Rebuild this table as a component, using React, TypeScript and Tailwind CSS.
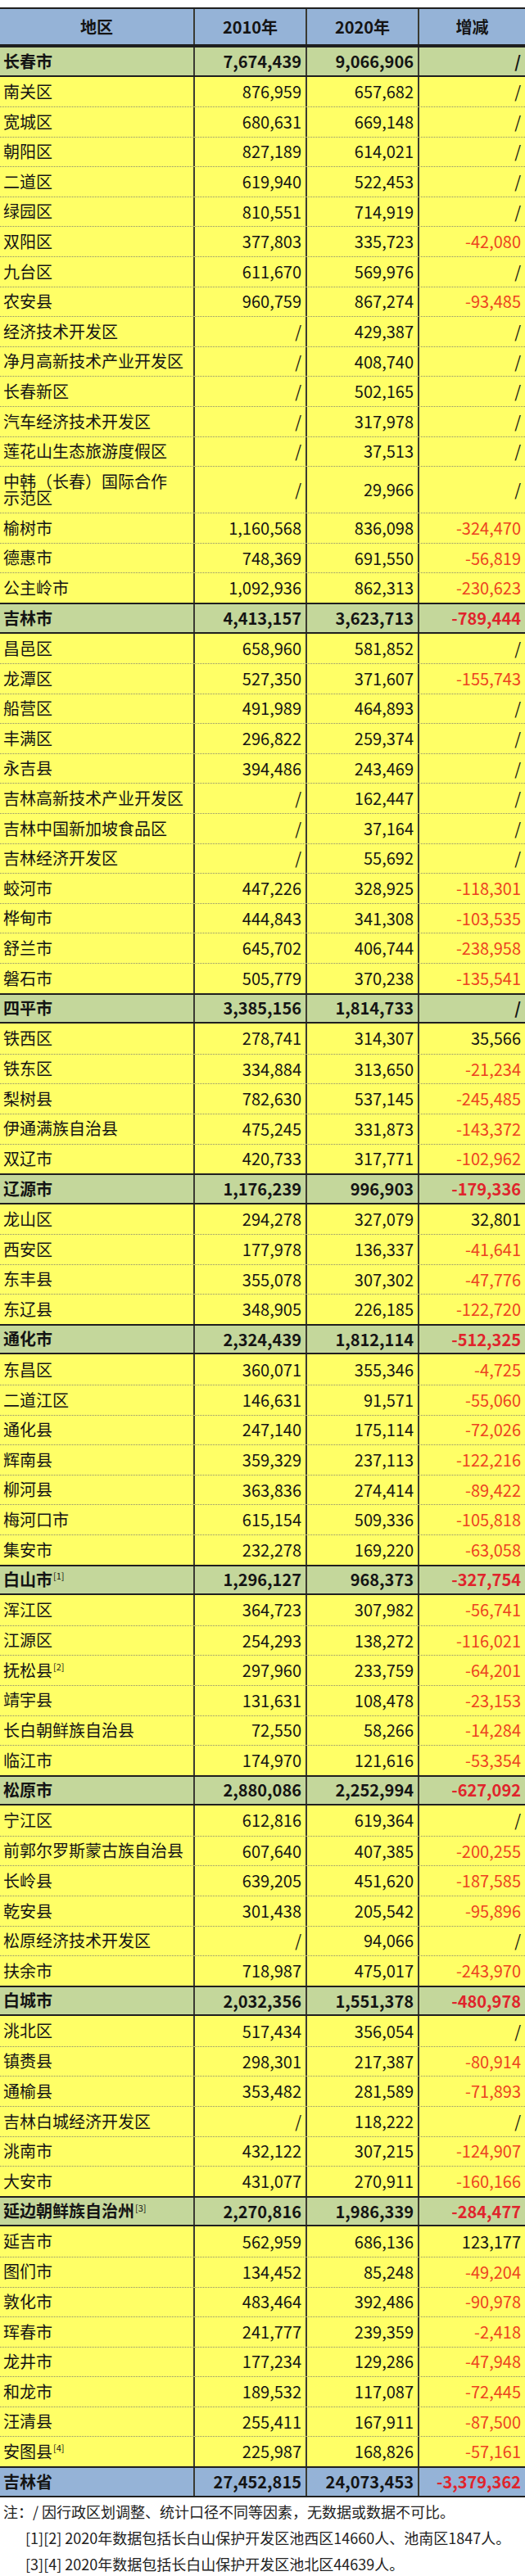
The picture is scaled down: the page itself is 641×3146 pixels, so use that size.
type Row = {
  name: string;
  sup?: string;
  a: string;
  b: string;
  d: string;
  group?: boolean;
  total?: boolean;
  tall?: boolean;
};

const rows: Row[] = [
  { name: "长春市", a: "7,674,439", b: "9,066,906", d: "/", group: true },
  { name: "南关区", a: "876,959", b: "657,682", d: "/" },
  { name: "宽城区", a: "680,631", b: "669,148", d: "/" },
  { name: "朝阳区", a: "827,189", b: "614,021", d: "/" },
  { name: "二道区", a: "619,940", b: "522,453", d: "/" },
  { name: "绿园区", a: "810,551", b: "714,919", d: "/" },
  { name: "双阳区", a: "377,803", b: "335,723", d: "-42,080" },
  { name: "九台区", a: "611,670", b: "569,976", d: "/" },
  { name: "农安县", a: "960,759", b: "867,274", d: "-93,485" },
  { name: "经济技术开发区", a: "/", b: "429,387", d: "/" },
  { name: "净月高新技术产业开发区", a: "/", b: "408,740", d: "/" },
  { name: "长春新区", a: "/", b: "502,165", d: "/" },
  { name: "汽车经济技术开发区", a: "/", b: "317,978", d: "/" },
  { name: "莲花山生态旅游度假区", a: "/", b: "37,513", d: "/" },
  { name: "中韩（长春）国际合作\n示范区", a: "/", b: "29,966", d: "/", tall: true },
  { name: "榆树市", a: "1,160,568", b: "836,098", d: "-324,470" },
  { name: "德惠市", a: "748,369", b: "691,550", d: "-56,819" },
  { name: "公主岭市", a: "1,092,936", b: "862,313", d: "-230,623" },
  { name: "吉林市", a: "4,413,157", b: "3,623,713", d: "-789,444", group: true },
  { name: "昌邑区", a: "658,960", b: "581,852", d: "/" },
  { name: "龙潭区", a: "527,350", b: "371,607", d: "-155,743" },
  { name: "船营区", a: "491,989", b: "464,893", d: "/" },
  { name: "丰满区", a: "296,822", b: "259,374", d: "/" },
  { name: "永吉县", a: "394,486", b: "243,469", d: "/" },
  { name: "吉林高新技术产业开发区", a: "/", b: "162,447", d: "/" },
  { name: "吉林中国新加坡食品区", a: "/", b: "37,164", d: "/" },
  { name: "吉林经济开发区", a: "/", b: "55,692", d: "/" },
  { name: "蛟河市", a: "447,226", b: "328,925", d: "-118,301" },
  { name: "桦甸市", a: "444,843", b: "341,308", d: "-103,535" },
  { name: "舒兰市", a: "645,702", b: "406,744", d: "-238,958" },
  { name: "磐石市", a: "505,779", b: "370,238", d: "-135,541" },
  { name: "四平市", a: "3,385,156", b: "1,814,733", d: "/", group: true },
  { name: "铁西区", a: "278,741", b: "314,307", d: "35,566" },
  { name: "铁东区", a: "334,884", b: "313,650", d: "-21,234" },
  { name: "梨树县", a: "782,630", b: "537,145", d: "-245,485" },
  { name: "伊通满族自治县", a: "475,245", b: "331,873", d: "-143,372" },
  { name: "双辽市", a: "420,733", b: "317,771", d: "-102,962" },
  { name: "辽源市", a: "1,176,239", b: "996,903", d: "-179,336", group: true },
  { name: "龙山区", a: "294,278", b: "327,079", d: "32,801" },
  { name: "西安区", a: "177,978", b: "136,337", d: "-41,641" },
  { name: "东丰县", a: "355,078", b: "307,302", d: "-47,776" },
  { name: "东辽县", a: "348,905", b: "226,185", d: "-122,720" },
  { name: "通化市", a: "2,324,439", b: "1,812,114", d: "-512,325", group: true },
  { name: "东昌区", a: "360,071", b: "355,346", d: "-4,725" },
  { name: "二道江区", a: "146,631", b: "91,571", d: "-55,060" },
  { name: "通化县", a: "247,140", b: "175,114", d: "-72,026" },
  { name: "辉南县", a: "359,329", b: "237,113", d: "-122,216" },
  { name: "柳河县", a: "363,836", b: "274,414", d: "-89,422" },
  { name: "梅河口市", a: "615,154", b: "509,336", d: "-105,818" },
  { name: "集安市", a: "232,278", b: "169,220", d: "-63,058" },
  { name: "白山市", sup: "[1]", a: "1,296,127", b: "968,373", d: "-327,754", group: true },
  { name: "浑江区", a: "364,723", b: "307,982", d: "-56,741" },
  { name: "江源区", a: "254,293", b: "138,272", d: "-116,021" },
  { name: "抚松县", sup: "[2]", a: "297,960", b: "233,759", d: "-64,201" },
  { name: "靖宇县", a: "131,631", b: "108,478", d: "-23,153" },
  { name: "长白朝鲜族自治县", a: "72,550", b: "58,266", d: "-14,284" },
  { name: "临江市", a: "174,970", b: "121,616", d: "-53,354" },
  { name: "松原市", a: "2,880,086", b: "2,252,994", d: "-627,092", group: true },
  { name: "宁江区", a: "612,816", b: "619,364", d: "/" },
  { name: "前郭尔罗斯蒙古族自治县", a: "607,640", b: "407,385", d: "-200,255" },
  { name: "长岭县", a: "639,205", b: "451,620", d: "-187,585" },
  { name: "乾安县", a: "301,438", b: "205,542", d: "-95,896" },
  { name: "松原经济技术开发区", a: "/", b: "94,066", d: "/" },
  { name: "扶余市", a: "718,987", b: "475,017", d: "-243,970" },
  { name: "白城市", a: "2,032,356", b: "1,551,378", d: "-480,978", group: true },
  { name: "洮北区", a: "517,434", b: "356,054", d: "/" },
  { name: "镇赉县", a: "298,301", b: "217,387", d: "-80,914" },
  { name: "通榆县", a: "353,482", b: "281,589", d: "-71,893" },
  { name: "吉林白城经济开发区", a: "/", b: "118,222", d: "/" },
  { name: "洮南市", a: "432,122", b: "307,215", d: "-124,907" },
  { name: "大安市", a: "431,077", b: "270,911", d: "-160,166" },
  { name: "延边朝鲜族自治州", sup: "[3]", a: "2,270,816", b: "1,986,339", d: "-284,477", group: true },
  { name: "延吉市", a: "562,959", b: "686,136", d: "123,177" },
  { name: "图们市", a: "134,452", b: "85,248", d: "-49,204" },
  { name: "敦化市", a: "483,464", b: "392,486", d: "-90,978" },
  { name: "珲春市", a: "241,777", b: "239,359", d: "-2,418" },
  { name: "龙井市", a: "177,234", b: "129,286", d: "-47,948" },
  { name: "和龙市", a: "189,532", b: "117,087", d: "-72,445" },
  { name: "汪清县", a: "255,411", b: "167,911", d: "-87,500" },
  { name: "安图县", sup: "[4]", a: "225,987", b: "168,826", d: "-57,161" },
  { name: "吉林省", a: "27,452,815", b: "24,073,453", d: "-3,379,362", total: true },
];

const cols = "grid grid-cols-[238px_137px_137px_129px]";
const vline = "border-r-2 border-[#3a3a32]";

function DataRow({ row, prevGroup }: { row: Row; prevGroup: boolean }) {
  const strong = row.group || row.total;
  const bg = row.total ? "bg-[#95b3d7]" : row.group ? "bg-[#c4d79b]" : "bg-[#ffff66]";
  const edge = strong
    ? "border-y-2 border-[#1f1f1f] h-[37.5px] font-bold"
    : prevGroup
      ? row.tall
        ? "h-[57px]"
        : "h-[36.6px]"
      : `border-t border-dotted border-[#8c8c6c] ${row.tall ? "h-[57px]" : "h-[36.6px]"}`;
  const neg = row.d.startsWith("-");
  const red = strong ? "text-[#e0242c]" : "text-[#ec4320]";

  return (
    <div className={`${cols} ${bg} ${edge}`}>
      <div className={`${vline} flex items-center pl-[4px] leading-[20.5px]`}>
        <span className="whitespace-pre-line">
          {row.name}
          {row.sup && <sup className="text-[11px] font-normal ml-[1px] -top-[0.7em]">{row.sup}</sup>}
        </span>
      </div>
      <div className={`${vline} flex items-center justify-end pr-[5px]`}>{row.a}</div>
      <div className={`${vline} flex items-center justify-end pr-[5px]`}>{row.b}</div>
      <div className={`flex items-center justify-end pr-[5px] ${neg ? red : ""}`}>{row.d}</div>
    </div>
  );
}

export default function App() {
  return (
    <div
      className="bg-white w-[641px] pt-[9px] text-[#141414] text-[20px]"
      style={{ fontFamily: '"Noto Sans CJK SC", "Noto Sans", sans-serif' }}
    >
      <div className="flex flex-col">
        <div className={`${cols} bg-[#95b3d7] border-y-2 border-[#1f1f1f] h-[47px] font-bold`}>
          <div className={`${vline} flex items-center justify-center`}>地区</div>
          <div className={`${vline} flex items-center justify-center`}>2010年</div>
          <div className={`${vline} flex items-center justify-center`}>2020年</div>
          <div className="flex items-center justify-center">增减</div>
        </div>
        {rows.map((row, i) => (
          <DataRow key={row.name} row={row} prevGroup={i === 0 || !!rows[i - 1].group} />
        ))}
      </div>
      <div className="text-[18px] leading-[32px] text-[#222] pt-[1px]">
        <p className="pl-[4px]">注：/ 因行政区划调整、统计口径不同等因素，无数据或数据不可比。</p>
        <p className="pl-[31px]">[1][2] 2020年数据包括长白山保护开发区池西区14660人、池南区1847人。</p>
        <p className="pl-[31px]">[3][4] 2020年数据包括长白山保护开发区池北区44639人。</p>
      </div>
    </div>
  );
}
